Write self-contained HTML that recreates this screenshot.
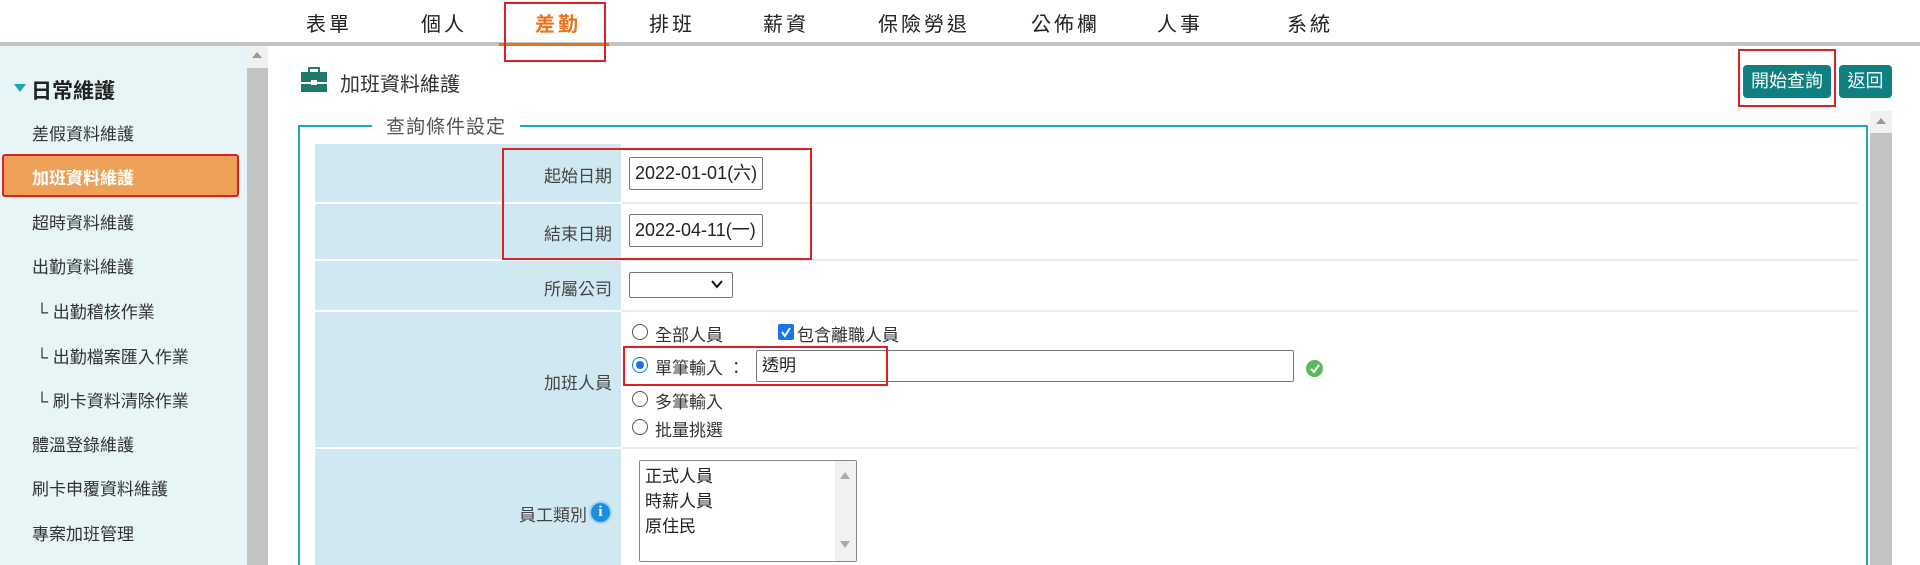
<!DOCTYPE html>
<html style="width:1920px;height:565px;overflow:hidden"><head><meta charset="utf-8"><style>
*{margin:0;padding:0;box-sizing:border-box}
body{width:1920px;height:565px;overflow:hidden;background:#fff;font-family:"Liberation Sans","Noto Sans CJK TC",sans-serif;color:#333;position:relative}
.a{position:absolute;white-space:nowrap}
.nav{font-size:20px;color:#222;top:8px;letter-spacing:3px}
.side{font-size:17px;color:#333;left:32px}
.lbl{font-size:17px;color:#444;text-align:right;right:1308px}
.inp{position:absolute;border:1px solid #777;border-radius:2px;background:#fff;font-size:18px;color:#222;padding-left:5px;line-height:31px}
.radio{position:absolute;width:16px;height:16px;border:1px solid #555;border-radius:50%;background:#fff}
.opt{font-size:17px;color:#333}
</style></head><body>
<div class="a nav" style="left:306px">表單</div>
<div class="a nav" style="left:421px">個人</div>
<div class="a nav" style="left:535px;color:#e8731c;font-weight:bold">差勤</div>
<div class="a nav" style="left:649px">排班</div>
<div class="a nav" style="left:763px">薪資</div>
<div class="a nav" style="left:878px">保險勞退</div>
<div class="a nav" style="left:1031px">公佈欄</div>
<div class="a nav" style="left:1157px">人事</div>
<div class="a nav" style="left:1287px">系統</div>
<div class="a" style="left:0;top:42px;width:1920px;height:4px;background:#c3c3c3"></div>
<div class="a" style="left:499px;top:43px;width:110px;height:3px;background:#e8731c"></div>
<div class="a" style="left:504px;top:2px;width:102px;height:60px;border:2px solid #e02020"></div>

<div class="a" style="left:0;top:46px;width:247px;height:519px;background:#e7f5f6"></div>
<div class="a" style="left:247px;top:46px;width:21px;height:519px;background:#c3c3c3"></div>
<div class="a" style="left:247px;top:46px;width:21px;height:22px;background:#f0f0f0"></div>
<div class="a" style="left:252px;top:52px;width:0;height:0;border-left:5px solid transparent;border-right:5px solid transparent;border-bottom:6px solid #999"></div>
<div class="a" style="left:14px;top:84px;width:0;height:0;border-left:6px solid transparent;border-right:6px solid transparent;border-top:8px solid #1aa9b0"></div>
<div class="a" style="left:31px;top:75px;font-size:21px;font-weight:bold;color:#222">日常維護</div>
<div class="a side" style="top:120px">差假資料維護</div>
<div class="a" style="left:2px;top:154px;width:237px;height:43px;background:#eca05a;border:2px solid #e02020;border-radius:3px"></div>
<div class="a side" style="top:164px;color:#fff;font-weight:bold">加班資料維護</div>
<div class="a side" style="top:209px">超時資料維護</div>
<div class="a side" style="top:253px">出勤資料維護</div>
<div class="a side" style="left:36px;top:298px">└ 出勤稽核作業</div>
<div class="a side" style="left:36px;top:343px">└ 出勤檔案匯入作業</div>
<div class="a side" style="left:36px;top:387px">└ 刷卡資料清除作業</div>
<div class="a side" style="top:431px">體溫登錄維護</div>
<div class="a side" style="top:475px">刷卡申覆資料維護</div>
<div class="a side" style="top:520px">專案加班管理</div>

<svg class="a" style="left:300px;top:67px" width="28" height="26" viewBox="0 0 28 26"><rect x="9" y="1" width="10" height="5" fill="none" stroke="#2a7a6a" stroke-width="2"/><rect x="1" y="5" width="26" height="20" fill="#1f7a6a"/><rect x="1" y="15" width="26" height="2" fill="#fff"/><rect x="11" y="13" width="6" height="5" fill="#fff"/></svg>
<div class="a" style="left:340px;top:68px;font-size:20px;color:#333">加班資料維護</div>
<div class="a" style="left:1743px;top:65px;width:88px;height:33px;background:#0f7f80;border-radius:4px;color:#fff;font-size:18px;line-height:33px;text-align:center">開始查詢</div>
<div class="a" style="left:1839px;top:65px;width:53px;height:33px;background:#0f7f80;border-radius:4px;color:#fff;font-size:18px;line-height:33px;text-align:center">返回</div>
<div class="a" style="left:1738px;top:49px;width:98px;height:58px;border:2px solid #e02020"></div>

<div class="a" style="left:298px;top:125px;width:1570px;height:460px;border:2px solid #1aa9b0"></div>
<div class="a" style="left:372px;top:112px;background:#fff;padding:0 14px;font-size:19px;color:#555;letter-spacing:1px">查詢條件設定</div>
<div class="a" style="left:1870px;top:111px;width:22px;height:454px;background:#c3c3c3"></div>
<div class="a" style="left:1870px;top:111px;width:22px;height:22px;background:#f0f0f0"></div>
<div class="a" style="left:1876px;top:118px;width:0;height:0;border-left:5px solid transparent;border-right:5px solid transparent;border-bottom:6px solid #999"></div>

<div class="a" style="left:315px;top:144px;width:306px;height:421px;background:#d0e8f2"></div>
<div class="a" style="left:315px;top:202px;width:1543px;height:2px;background:#e3eef5"></div>
<div class="a" style="left:315px;top:259px;width:1543px;height:2px;background:#e3eef5"></div>
<div class="a" style="left:315px;top:310px;width:1543px;height:2px;background:#e3eef5"></div>
<div class="a" style="left:315px;top:447px;width:1543px;height:2px;background:#e3eef5"></div>
<div class="a" style="left:315px;top:202px;width:306px;height:2px;background:#fff"></div>
<div class="a" style="left:315px;top:259px;width:306px;height:2px;background:#fff"></div>
<div class="a" style="left:315px;top:310px;width:306px;height:2px;background:#fff"></div>
<div class="a" style="left:315px;top:447px;width:306px;height:2px;background:#fff"></div>

<div class="a lbl" style="top:162px">起始日期</div>
<div class="a lbl" style="top:220px">結束日期</div>
<div class="a lbl" style="top:275px">所屬公司</div>
<div class="a lbl" style="top:369px">加班人員</div>
<div class="a lbl" style="top:501px;right:1333px">員工類別</div>
<div class="a" style="left:589px;top:501px;width:23px;height:23px;border-radius:50%;background:#1a8ee0;border:2px solid #9fd3f5;color:#fff;font-size:15px;font-weight:bold;text-align:center;line-height:19px;font-family:'Liberation Serif',serif">i</div>

<div class="inp" style="left:629px;top:157px;width:134px;height:33px">2022-01-01(六)</div>
<div class="inp" style="left:629px;top:214px;width:134px;height:33px">2022-04-11(一)</div>
<div class="a" style="left:502px;top:148px;width:310px;height:112px;border:2px solid #e02020"></div>
<div class="inp" style="left:629px;top:272px;width:104px;height:26px"></div>
<svg class="a" style="left:711px;top:280px" width="12" height="9"><path d="M1 1 L6 7 L11 1" fill="none" stroke="#111" stroke-width="2"/></svg>

<div class="radio" style="left:632px;top:324px"></div>
<div class="a opt" style="left:655px;top:321px">全部人員</div>
<div class="a" style="left:778px;top:324px;width:16px;height:16px;background:#1a73e8;border-radius:2px"></div>
<svg class="a" style="left:779px;top:325px" width="14" height="14"><path d="M3 7 L6 11 L11 3" fill="none" stroke="#fff" stroke-width="2"/></svg>
<div class="a opt" style="left:797px;top:321px">包含離職人員</div>

<div class="radio" style="left:632px;top:357px;border:1px solid #1a73e8"></div>
<div class="a" style="left:636px;top:361px;width:8px;height:8px;border-radius:50%;background:#1a73e8"></div>
<div class="a opt" style="left:655px;top:354px">單筆輸入 ：</div>
<div class="inp" style="left:756px;top:350px;width:538px;height:32px;line-height:30px;font-size:17px">透明</div>
<div class="a" style="left:623px;top:346px;width:265px;height:40px;border:2px solid #e02020"></div>
<div class="a" style="left:1306px;top:360px;width:17px;height:17px;border-radius:50%;background:#5cb85c"></div>
<svg class="a" style="left:1308px;top:362px" width="13" height="13"><path d="M3 7 L6 10 L11 3" fill="none" stroke="#fff" stroke-width="2"/></svg>

<div class="radio" style="left:632px;top:391px"></div>
<div class="a opt" style="left:655px;top:388px">多筆輸入</div>
<div class="radio" style="left:632px;top:419px"></div>
<div class="a opt" style="left:655px;top:416px">批量挑選</div>

<div class="a" style="left:639px;top:460px;width:218px;height:102px;border:1px solid #888;background:#fff;border-radius:2px"></div>
<div class="a" style="left:835px;top:461px;width:21px;height:100px;background:#f1f1f1"></div>
<div class="a" style="left:840px;top:472px;width:0;height:0;border-left:5px solid transparent;border-right:5px solid transparent;border-bottom:7px solid #aaa"></div>
<div class="a" style="left:840px;top:541px;width:0;height:0;border-left:5px solid transparent;border-right:5px solid transparent;border-top:7px solid #aaa"></div>
<div class="a" style="left:645px;top:464px;font-size:17px;color:#222;line-height:25px">正式人員<br>時薪人員<br>原住民</div>
</body></html>
